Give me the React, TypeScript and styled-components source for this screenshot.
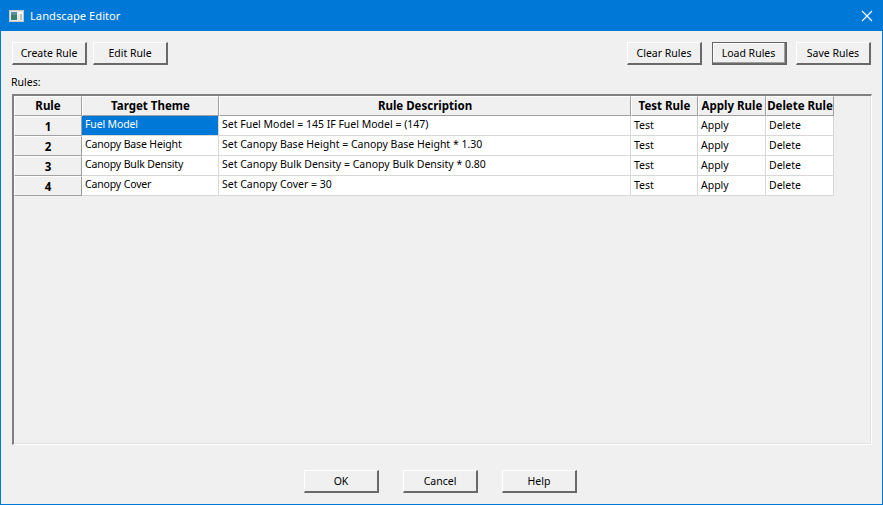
import * as React from 'react';
import styled, { createGlobalStyle, css } from 'styled-components';

const GlobalStyle = createGlobalStyle`
    html, body {
        margin: 0;
        padding: 0;
        background: #f0f0f0;
    }
    * {
        box-sizing: border-box;
    }
`;

const Window = styled.div`
    width: 883px;
    height: 505px;
    display: flex;
    flex-direction: column;
    border: 1px solid #0078d7;
    border-top: 0;
    background: #f0f0f0;
    font-family: "Noto Sans", "Liberation Sans", sans-serif;
    font-size: 10.5px;
    color: #000;
    overflow: hidden;
`;

const TitleBar = styled.div`
    height: 31px;
    flex: none;
    margin: 0 -1px;
    padding: 0 10px 0 9px;
    display: flex;
    align-items: center;
    background: #0078d7;
    color: #fff;
    font-size: 11.2px;
`;

const Title = styled.span`
    margin-left: 5px;
    flex: 1;
`;

const Toolbar = styled.div`
    display: flex;
    justify-content: space-between;
    padding: 11px 11px 0 11px;
`;

const ButtonGroup = styled.div<{ $gap: number }>`
    display: flex;
    gap: ${({ $gap }) => $gap}px;
`;

const Button = styled.button<{ $focused?: boolean }>`
    width: 75px;
    height: 23px;
    padding: 0;
    font: inherit;
    color: #000;
    background: #f0f0f0;
    border-style: solid;
    border-width: 1px 2px 2px 1px;
    border-color: #fff #696969 #696969 #fff;
    ${({ $focused }) => $focused && css`
        border: 1px solid #646464;
        padding: 0 1px 1px 0;
        box-shadow: inset -1px -1px 0 #696969, inset -2px -2px 0 #a0a0a0, inset 1px 1px 0 #fff;
    `}
`;

const RulesLabel = styled.div`
    margin: 10px 0 5px 10px;
    height: 14px;
    line-height: 14px;
`;

const TableFrame = styled.div`
    margin: 0 10px 0 11px;
    height: 351px;
    flex: none;
    border-style: solid;
    border-width: 2px 1px 1px 2px;
    border-color: #808080 #fff #fff #808080;
    box-shadow: inset -1px -1px 0 #e3e3e3;
`;

const Grid = styled.div`
    display: grid;
    grid-template-columns: 68px 137px 412px 67px 68px 68px;
    grid-auto-rows: 20px;
    width: 820px;
`;

const HeaderCell = styled.div<{ $column?: boolean }>`
    display: flex;
    align-items: center;
    justify-content: center;
    padding-bottom: ${({ $column }) => ($column ? 2 : 0)}px;
    background: #f0f0f0;
    font-size: 11.5px;
    font-weight: 700;
    white-space: nowrap;
    border-style: solid;
    border-width: 1px;
    border-color: #fff #a0a0a0 #a0a0a0 #fff;
`;

const Cell = styled.div<{ $selected?: boolean; $raised?: boolean; $tight?: boolean }>`
    display: flex;
    align-items: center;
    padding: 0 0 ${({ $raised }) => ($raised ? 4 : 2)}px 3px;
    white-space: nowrap;
    letter-spacing: ${({ $tight }) => ($tight ? '-0.15px' : 'normal')};
    background: ${({ $selected }) => ($selected ? '#0078d7' : '#fff')};
    color: ${({ $selected }) => ($selected ? '#fff' : '#000')};
    border-right: 1px solid #d8d8d8;
    border-bottom: 1px solid #d8d8d8;
`;

const Footer = styled.div`
    display: flex;
    justify-content: center;
    gap: 24px;
    padding: 25px 2px 0 0;
`;

const rules = [
    { id: 1, theme: 'Fuel Model', description: 'Set Fuel Model = 145 IF Fuel Model = (147)' },
    { id: 2, theme: 'Canopy Base Height', description: 'Set Canopy Base Height = Canopy Base Height * 1.30' },
    { id: 3, theme: 'Canopy Bulk Density', description: 'Set Canopy Bulk Density = Canopy Bulk Density * 0.80' },
    { id: 4, theme: 'Canopy Cover', description: 'Set Canopy Cover = 30' },
];

const headers = ['Rule', 'Target Theme', 'Rule Description', 'Test Rule', 'Apply Rule', 'Delete Rule'];

const AppIcon = () => (
    <svg width="16" height="16" viewBox="0 0 16 16">
        <rect x="0.5" y="2.5" width="14" height="11" fill="#e8e8e8" stroke="#c8c8c8" />
        <rect x="2" y="4" width="6" height="8" fill="#3f7f6f" />
        <rect x="2" y="4" width="6" height="3" fill="#5c8f9a" />
        <rect x="9" y="4" width="4" height="2" fill="#ffffff" />
        <rect x="11" y="6" width="2" height="6" fill="#b8c8c8" />
    </svg>
);

const CloseIcon = () => (
    <svg width="12" height="12" viewBox="0 0 12 12">
        <path d="M1 1 L11 11 M11 1 L1 11" stroke="#fff" strokeWidth="1.1" fill="none" />
    </svg>
);

const App: React.FC = () => {
    return (
        <Window>
            <GlobalStyle />
            <TitleBar>
                <AppIcon />
                <Title>Landscape Editor</Title>
                <CloseIcon />
            </TitleBar>
            <Toolbar>
                <ButtonGroup $gap={6}>
                    <Button>Create Rule</Button>
                    <Button>Edit Rule</Button>
                </ButtonGroup>
                <ButtonGroup $gap={9.5}>
                    <Button>Clear Rules</Button>
                    <Button $focused>Load Rules</Button>
                    <Button>Save Rules</Button>
                </ButtonGroup>
            </Toolbar>
            <RulesLabel>Rules:</RulesLabel>
            <TableFrame>
                <Grid>
                    {headers.map((h) => (
                        <HeaderCell key={h} $column>{h}</HeaderCell>
                    ))}
                    {rules.map((r) => (
                        <React.Fragment key={r.id}>
                            <HeaderCell>{r.id}</HeaderCell>
                            <Cell $selected={r.id === 1} $raised $tight>{r.theme}</Cell>
                            <Cell $raised>{r.description}</Cell>
                            <Cell>Test</Cell>
                            <Cell>Apply</Cell>
                            <Cell>Delete</Cell>
                        </React.Fragment>
                    ))}
                </Grid>
            </TableFrame>
            <Footer>
                <Button>OK</Button>
                <Button>Cancel</Button>
                <Button>Help</Button>
            </Footer>
        </Window>
    );
};

export default App;
